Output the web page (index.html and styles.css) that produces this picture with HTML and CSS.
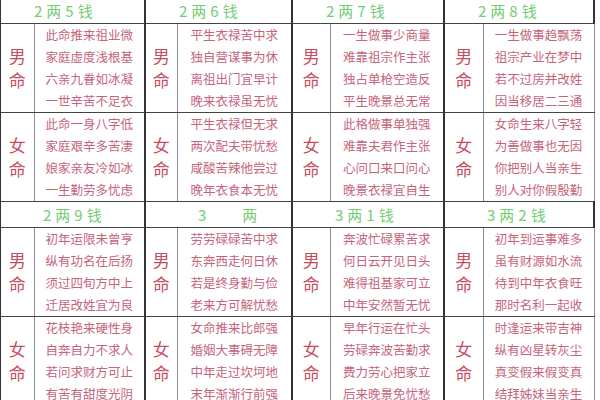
FILE: index.html
```html
<!DOCTYPE html>
<html lang="zh">
<head>
<meta charset="utf-8">
<title>称骨算命</title>
<link rel="stylesheet" href="styles.css">
</head>
<body>
<table class="chart">
  <colgroup>
    <col class="c-l1"><col class="c-t1"><col class="c-l2"><col class="c-t2">
    <col class="c-l3"><col class="c-t3"><col class="c-l4"><col class="c-t4">
  </colgroup>
  <tbody>
    <tr class="head head-a">
      <th colspan="2" class="grp">2两5钱</th>
      <th colspan="2" class="grp">2两6钱</th>
      <th colspan="2" class="grp">2两7钱</th>
      <th colspan="2" class="grp">2两8钱</th>
    </tr>
    <tr class="row">
      <td class="label grp">男<br>命</td>
      <td class="verse">此命推来祖业微<br>家庭虚度浅根基<br>六亲九眷如冰凝<br>一世辛苦不足衣</td>
      <td class="label grp">男<br>命</td>
      <td class="verse">平生衣禄苦中求<br>独自营谋事为休<br>离祖出门宜早计<br>晚来衣禄虽无忧</td>
      <td class="label grp">男<br>命</td>
      <td class="verse">一生做事少商量<br>难靠祖宗作主张<br>独占单枪空造反<br>平生晚景总无常</td>
      <td class="label grp">男<br>命</td>
      <td class="verse">一生做事趋飘荡<br>祖宗产业在梦中<br>若不过房并改姓<br>因当移居二三通</td>
    </tr>
    <tr class="row">
      <td class="label grp">女<br>命</td>
      <td class="verse">此命一身八字低<br>家庭艰辛多苦凄<br>娘家亲友冷如冰<br>一生勤劳多忧虑</td>
      <td class="label grp">女<br>命</td>
      <td class="verse">平生衣禄但无求<br>两次配夫带忧愁<br>咸酸苦辣他尝过<br>晚年衣食本无忧</td>
      <td class="label grp">女<br>命</td>
      <td class="verse">此格做事单独强<br>难靠夫君作主张<br>心问口来口问心<br>晚景衣禄宜自生</td>
      <td class="label grp">女<br>命</td>
      <td class="verse">女命生来八字轻<br>为善做事也无因<br>你把别人当亲生<br>别人对你假殷勤</td>
    </tr>
    <tr class="head head-b">
      <th colspan="2" class="grp">2两9钱</th>
      <th colspan="2" class="grp wide">3　　两</th>
      <th colspan="2" class="grp">3两1钱</th>
      <th colspan="2" class="grp">3两2钱</th>
    </tr>
    <tr class="row">
      <td class="label grp">男<br>命</td>
      <td class="verse">初年运限未曾亨<br>纵有功名在后扬<br>须过四旬方中上<br>迁居改姓宜为良</td>
      <td class="label grp">男<br>命</td>
      <td class="verse">劳劳碌碌苦中求<br>东奔西走何日休<br>若是终身勤与俭<br>老来方可解忧愁</td>
      <td class="label grp">男<br>命</td>
      <td class="verse">奔波忙碌累苦求<br>何日云开见日头<br>难得祖基家可立<br>中年安然暂无忧</td>
      <td class="label grp">男<br>命</td>
      <td class="verse">初年到运事难多<br>虽有财源如水流<br>待到中年衣食旺<br>那时名利一起收</td>
    </tr>
    <tr class="row">
      <td class="label grp">女<br>命</td>
      <td class="verse">花枝艳来硬性身<br>自奔自力不求人<br>若问求财方可止<br>有苦有甜度光阴</td>
      <td class="label grp">女<br>命</td>
      <td class="verse">女命推来比郎强<br>婚姻大事碍无障<br>中年走过坎坷地<br>末年渐渐行前强</td>
      <td class="label grp">女<br>命</td>
      <td class="verse">早年行运在忙头<br>劳碌奔波苦勤求<br>费力劳心把家立<br>后来晚景免忧愁</td>
      <td class="label grp">女<br>命</td>
      <td class="verse">时逢运来带吉神<br>纵有凶星转灰尘<br>真变假来假变真<br>结拜姊妹当亲生</td>
    </tr>
  </tbody>
</table>
</body>
</html>
```

FILE: styles.css
```css
html, body {
  margin: 0;
  padding: 0;
  background: #ffffff;
  overflow: hidden;
}

body {
  width: 600px;
  height: 400px;
  font-family: "Noto Sans CJK SC", "Liberation Serif", serif;
}

.chart {
  border-collapse: collapse;
  table-layout: fixed;
  width: 594px;
  margin: -3px 0 0 -1px;
}

.c-l1 { width: 34px; }
.c-t1 { width: 111px; }
.c-l2 { width: 32px; }
.c-t2 { width: 115px; }
.c-l3 { width: 38px; }
.c-t3 { width: 114px; }
.c-l4 { width: 39px; }
.c-t4 { width: 111px; }

.chart th,
.chart td {
  padding: 0;
  border-top: 1px solid #444444;
  border-bottom: 1px solid #444444;
  border-right: 1px solid #8e8e8e;
}

.chart .grp {
  border-left: 2px solid #333333;
}

.head th {
  height: 25px;
  text-align: left;
  font-weight: normal;
  font-size: 15px;
  letter-spacing: 4px;
  color: #74cc74;
  white-space: nowrap;
  border-right: 2px solid #333333;
}

.head-a th { padding-left: 33px; }
.head-b th { padding-left: 42px; }
.head-b th.wide { padding-left: 52px; letter-spacing: 2px; }

.row td {
  height: 88px;
}

.label {
  text-align: center;
  font-size: 17px;
  line-height: 24px;
  color: #c94c5e;
}

.verse {
  text-align: center;
  font-size: 12.5px;
  line-height: 22px;
  color: #c6647a;
  white-space: nowrap;
}
```
